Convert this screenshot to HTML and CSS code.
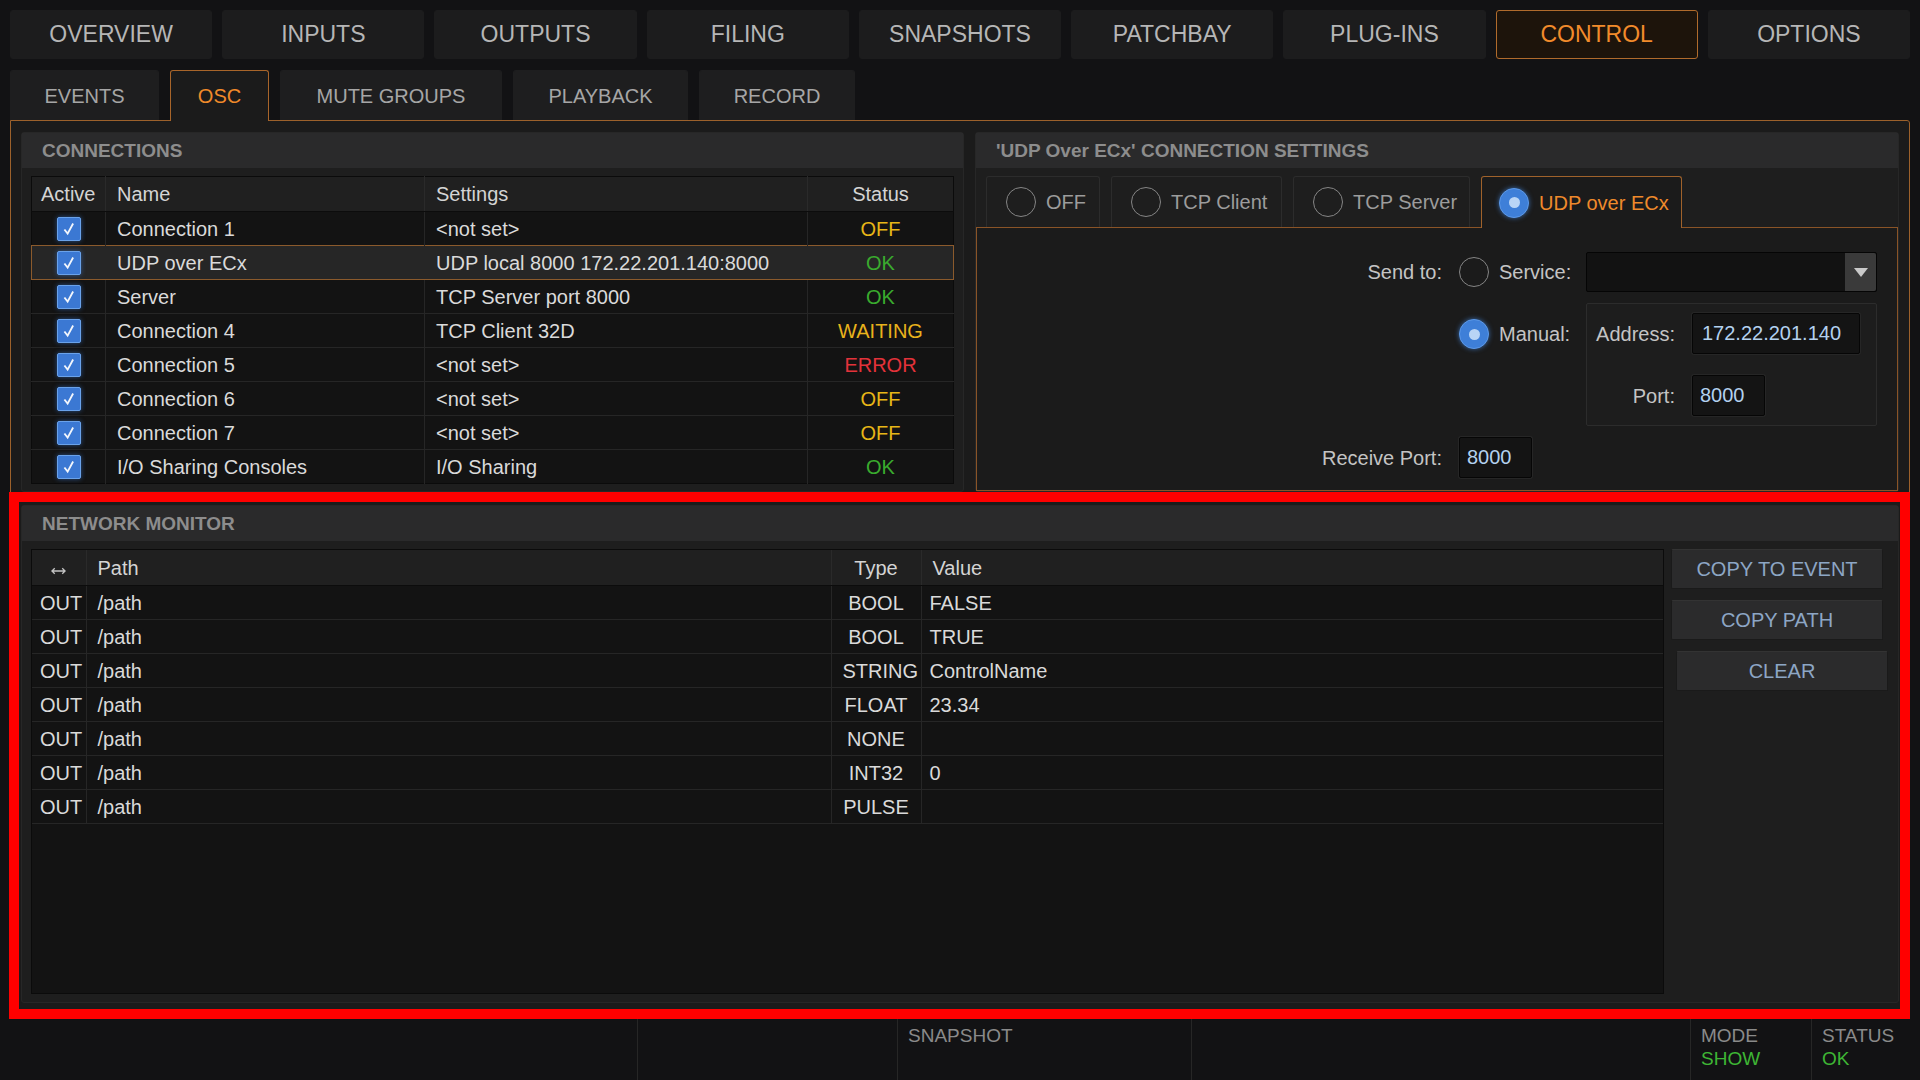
FILE: index.html
```html
<!DOCTYPE html>
<html lang="en">
<head>
    <meta charset="UTF-8">
    <title>Control - OSC</title>
    <link rel="stylesheet" href="styles.css">
</head>
<body>
    <div id="app">
        <ul class="main-tabs">
            <li>OVERVIEW</li>
            <li>INPUTS</li>
            <li>OUTPUTS</li>
            <li>FILING</li>
            <li>SNAPSHOTS</li>
            <li>PATCHBAY</li>
            <li>PLUG-INS</li>
            <li class="on">CONTROL</li>
            <li>OPTIONS</li>
        </ul>
        <ul class="sub-tabs">
            <li class="w-events">EVENTS</li>
            <li class="w-osc on">OSC</li>
            <li class="w-mute">MUTE GROUPS</li>
            <li class="w-play">PLAYBACK</li>
            <li class="w-rec">RECORD</li>
        </ul>

        <div class="main-panel">
            <div class="top-row">
                <div class="panel conn">
                    <h2>CONNECTIONS</h2>
                    <table class="grid conn-table">
                        <colgroup>
                            <col style="width:74px">
                            <col style="width:319px">
                            <col style="width:383px">
                            <col>
                        </colgroup>
                        <tr>
                            <th>Active</th><th>Name</th><th>Settings</th><th class="c">Status</th>
                        </tr>
                        <tr>
                            <td class="c"><span class="chk"><svg viewBox="0 0 24 24"><polyline points="7,12.5 10.5,17 16.5,6"/></svg></span></td>
                            <td>Connection 1</td><td>&lt;not set&gt;</td><td class="c off">OFF</td>
                        </tr>
                        <tr class="sel">
                            <td class="c"><span class="chk"><svg viewBox="0 0 24 24"><polyline points="7,12.5 10.5,17 16.5,6"/></svg></span></td>
                            <td>UDP over ECx</td><td>UDP local 8000 172.22.201.140:8000</td><td class="c ok">OK</td>
                        </tr>
                        <tr>
                            <td class="c"><span class="chk"><svg viewBox="0 0 24 24"><polyline points="7,12.5 10.5,17 16.5,6"/></svg></span></td>
                            <td>Server</td><td>TCP Server port 8000</td><td class="c ok">OK</td>
                        </tr>
                        <tr>
                            <td class="c"><span class="chk"><svg viewBox="0 0 24 24"><polyline points="7,12.5 10.5,17 16.5,6"/></svg></span></td>
                            <td>Connection 4</td><td>TCP Client 32D</td><td class="c wait">WAITING</td>
                        </tr>
                        <tr>
                            <td class="c"><span class="chk"><svg viewBox="0 0 24 24"><polyline points="7,12.5 10.5,17 16.5,6"/></svg></span></td>
                            <td>Connection 5</td><td>&lt;not set&gt;</td><td class="c err">ERROR</td>
                        </tr>
                        <tr>
                            <td class="c"><span class="chk"><svg viewBox="0 0 24 24"><polyline points="7,12.5 10.5,17 16.5,6"/></svg></span></td>
                            <td>Connection 6</td><td>&lt;not set&gt;</td><td class="c off">OFF</td>
                        </tr>
                        <tr>
                            <td class="c"><span class="chk"><svg viewBox="0 0 24 24"><polyline points="7,12.5 10.5,17 16.5,6"/></svg></span></td>
                            <td>Connection 7</td><td>&lt;not set&gt;</td><td class="c off">OFF</td>
                        </tr>
                        <tr>
                            <td class="c"><span class="chk"><svg viewBox="0 0 24 24"><polyline points="7,12.5 10.5,17 16.5,6"/></svg></span></td>
                            <td>I/O Sharing Consoles</td><td>I/O Sharing</td><td class="c ok">OK</td>
                        </tr>
                    </table>
                </div>

                <div class="panel udp">
                    <h2>'UDP Over ECx' CONNECTION SETTINGS</h2>
                    <ul class="mode-tabs">
                        <li class="w-off"><span class="radio"></span>OFF</li>
                        <li class="w-client"><span class="radio"></span>TCP Client</li>
                        <li class="w-server"><span class="radio"></span>TCP Server</li>
                        <li class="w-udp on"><span class="radio on"></span>UDP over ECx</li>
                    </ul>
                    <div class="mode-body">
                        <div class="send-grid">
                            <label class="lbl">Send to:</label>
                            <span class="radio"></span>
                            <label class="opt">Service:</label>
                            <div class="dropdown"><div class="dd-field"></div><div class="dd-arrow"></div></div>

                            <span class="radio on top"></span>
                            <label class="opt top">Manual:</label>
                            <div class="group">
                                <label>Address:</label>
                                <div class="field w-addr">172.22.201.140</div>
                                <label>Port:</label>
                                <div class="field w-port">8000</div>
                            </div>

                            <label class="lbl">Receive Port:</label>
                            <div class="field w-port recv">8000</div>
                        </div>
                    </div>
                </div>
            </div>

            <div class="panel monitor">
                <h2>NETWORK MONITOR</h2>
                <div class="monitor-body">
                    <div class="monitor-list">
                        <table class="grid mon-table">
                            <colgroup>
                                <col style="width:54px">
                                <col style="width:745px">
                                <col style="width:90px">
                                <col>
                            </colgroup>
                            <tr>
                                <th class="c"><svg class="dir" viewBox="0 0 16 8"><path d="M1 4h14M4 1L1 4l3 3M12 1l3 3-3 3"/></svg></th>
                                <th>Path</th><th class="c">Type</th><th>Value</th>
                            </tr>
                            <tr><td>OUT</td><td>/path</td><td class="c">BOOL</td><td>FALSE</td></tr>
                            <tr><td>OUT</td><td>/path</td><td class="c">BOOL</td><td>TRUE</td></tr>
                            <tr><td>OUT</td><td>/path</td><td class="c">STRING</td><td>ControlName</td></tr>
                            <tr><td>OUT</td><td>/path</td><td class="c">FLOAT</td><td>23.34</td></tr>
                            <tr><td>OUT</td><td>/path</td><td class="c">NONE</td><td></td></tr>
                            <tr><td>OUT</td><td>/path</td><td class="c">INT32</td><td>0</td></tr>
                            <tr><td>OUT</td><td>/path</td><td class="c">PULSE</td><td></td></tr>
                        </table>
                    </div>
                    <div class="monitor-btns">
                        <a class="btn">COPY TO EVENT</a>
                        <a class="btn">COPY PATH</a>
                        <a class="btn pressed">CLEAR</a>
                    </div>
                </div>
            </div>
        </div>

        <div class="status-bar">
            <div></div>
            <div></div>
            <div>SNAPSHOT</div>
            <div></div>
            <div>MODE<br><span class="green">SHOW</span></div>
            <div>STATUS<br><span class="green">OK</span></div>
        </div>
    </div>
    <div class="highlight"></div>
</body>
</html>
```

FILE: styles.css
```css
body,ul,li,h2,table{
    margin: 0;
    padding: 0;
}
body{
    background-color: #121214;
    font: 20px/1 "Liberation Sans", Arial, sans-serif;
    color: #d6d6d6;
}
ul{
    list-style-type: none;
}
#app{
    width: 1920px;
    height: 1080px;
    padding: 10px 10px 0;
    box-sizing: border-box;
}

/* top navigation */
.main-tabs{
    display: grid;
    grid-template-columns: repeat(9, 1fr);
    gap: 10px;
    height: 49px;
}
.main-tabs li{
    display: flex;
    align-items: center;
    justify-content: center;
    background-color: #1c1c1d;
    border: 1px solid #1c1c1d;
    border-radius: 3px;
    font-size: 23px;
    color: #b6b6b6;
}
.main-tabs li.on{
    background-color: #1d140b;
    border-color: #b06b2c;
    color: #f28b2b;
}
.sub-tabs{
    display: flex;
    gap: 11px;
    margin-top: 11px;
    height: 50px;
}
.sub-tabs li{
    display: flex;
    align-items: center;
    justify-content: center;
    box-sizing: border-box;
    background-color: #1e1e1f;
    border: 1px solid #1e1e1f;
    border-bottom: 0;
    border-radius: 3px 3px 0 0;
    color: #a6a6a6;
}
.sub-tabs li.on{
    position: relative;
    z-index: 1;
    height: 51px;
    margin-bottom: -1px;
    background-color: #1b1b1b;
    border-color: #a8652a;
    color: #f08a2a;
}
.w-events{ width: 149px; }
.w-osc{ width: 99px; }
.w-mute{ width: 222px; }
.w-play{ width: 175px; }
.w-rec{ width: 156px; }

/* main panel */
.main-panel{
    height: 890px;
    box-sizing: border-box;
    padding: 11px 10px 0;
    background-color: #1b1b1b;
    border: 1px solid #9c612b;
    border-radius: 0 3px 3px 3px;
}
.top-row{
    display: flex;
    gap: 11px;
    height: 360px;
}
.panel{
    display: flex;
    flex-direction: column;
    box-sizing: border-box;
    background-color: #1e1e1e;
    border: 1px solid #272727;
    border-radius: 3px;
}
.panel h2{
    height: 35px;
    padding-left: 20px;
    background-color: #2a2a2b;
    font: 700 19px/36px "Liberation Sans", Arial, sans-serif;
    color: #8d8d8d;
}
.conn{
    width: 943px;
}
.udp{
    flex: 1;
}

/* tables */
.grid{
    border-collapse: collapse;
    table-layout: fixed;
    background-color: #131313;
}
.grid th{
    height: 34px;
    padding: 0 11px;
    background-color: #202020;
    border-left: 1px solid #2a2a2a;
    border-bottom: 1px solid #0c0c0c;
    font-weight: normal;
    text-align: left;
    color: #d4d4d4;
}
.grid td{
    height: 33px;
    padding: 0 11px;
    border-top: 1px solid #262626;
    border-left: 1px solid #262626;
    white-space: nowrap;
    color: #dadada;
}
.grid th:first-child,
.grid td:first-child{
    border-left: 0;
}
.grid .c{
    text-align: center;
}
.conn-table{
    width: 923px;
    margin: 8px 0 0 9px;
    border: 1px solid #0b0b0b;
}
.conn-table th:first-child{
    padding: 0 0 0 9px;
    text-align: left;
}
.conn-table td.c:first-child{
    padding: 0;
}
.conn-table tr.sel td{
    background-color: #262626;
    border-top: 1px solid #8b5a2c;
    border-bottom: 1px solid #8b5a2c;
}
.conn-table tr.sel td:first-child{
    border-left: 1px solid #8b5a2c;
}
.conn-table tr.sel td:last-child{
    border-right: 1px solid #8b5a2c;
}
.chk{
    display: inline-block;
    width: 24px;
    height: 24px;
    box-sizing: border-box;
    vertical-align: middle;
    background-color: #3b78d3;
    border: 1px solid #6aa2ea;
    border-radius: 2px;
    box-shadow: 0 0 5px rgba(60, 130, 230, .55);
}
.chk svg{
    display: block;
    width: 22px;
    height: 22px;
    fill: none;
    stroke: #f2f6fc;
    stroke-width: 2;
}
.off{ color: #e7b617 !important; }
.ok{ color: #3aab2e !important; }
.wait{ color: #e8b21c !important; }
.err{ color: #e3323a !important; }

/* udp settings */
.mode-tabs{
    display: flex;
    gap: 11px;
    height: 51px;
    margin: 8px 0 0 10px;
}
.mode-tabs li{
    display: flex;
    align-items: center;
    gap: 10px;
    box-sizing: border-box;
    padding-left: 19px;
    background-color: #1e1e1e;
    border: 1px solid #2c2c2c;
    border-bottom: 0;
    border-radius: 3px 3px 0 0;
    font-size: 20px;
    color: #9c9c9c;
}
.mode-tabs li.on{
    position: relative;
    z-index: 1;
    margin-bottom: -1px;
    height: 52px;
    padding-left: 17px;
    background-color: #1b1b1b;
    border-color: #a0622b;
    color: #ef8a2b;
}
.w-off{ width: 114px; }
.w-client{ width: 171px; }
.w-server{ width: 177px; }
.w-udp{ width: 201px; }
.radio{
    display: flex;
    align-items: center;
    justify-content: center;
    flex: none;
    width: 30px;
    height: 30px;
    box-sizing: border-box;
    border: 1px solid #858585;
    border-radius: 50%;
}
.radio.on{
    background-color: #3e7fd8;
    border-color: #5d99e8;
    box-shadow: 0 0 5px rgba(70, 140, 230, .7);
}
.radio.on::after{
    content: "";
    width: 11px;
    height: 11px;
    border-radius: 50%;
    background-color: #b9d5f6;
}
.mode-body{
    flex: 1;
    background-color: #1b1b1b;
    border: 1px solid #8a5427;
}
.send-grid{
    display: grid;
    grid-template-columns: 472px 30px 77px 291px;
    grid-template-rows: 40px 123px 41px;
    column-gap: 10px;
    row-gap: 11px;
    padding-top: 24px;
    align-items: center;
}
.send-grid label{
    color: #c4c4c4;
}
.send-grid .lbl{
    grid-column: 1;
    padding-right: 7px;
    text-align: right;
}
.send-grid .radio.top{
    grid-column: 2;
    align-self: start;
    margin-top: 16px;
}
.send-grid .opt.top{
    align-self: start;
    margin-top: 21px;
}
.dropdown{
    display: flex;
    height: 40px;
    box-sizing: border-box;
    border: 1px solid #050505;
    border-radius: 2px;
    background-color: #121212;
}
.dd-field{
    flex: 1;
}
.dd-arrow{
    display: flex;
    align-items: center;
    justify-content: center;
    width: 31px;
    background-color: #3a3a3a;
    border-radius: 0 2px 2px 0;
}
.dd-arrow::after{
    content: "";
    border-top: 9px solid #c9c9c9;
    border-left: 7px solid transparent;
    border-right: 7px solid transparent;
}
.group{
    display: grid;
    grid-template-columns: 88px auto;
    grid-template-rows: 41px 41px;
    column-gap: 17px;
    row-gap: 21px;
    align-items: center;
    justify-items: start;
    height: 123px;
    box-sizing: border-box;
    padding: 9px 0;
    background-color: #1d1d1d;
    border: 1px solid #2c2c2c;
    border-radius: 2px;
}
.group label{
    justify-self: end;
}
.field{
    height: 41px;
    box-sizing: border-box;
    padding-left: 9px;
    line-height: 39px;
    background-color: #141414;
    border: 1px solid #060606;
    border-radius: 2px;
    box-shadow: 0 0 0 1px #262626;
    color: #b3d1ef;
}
.w-addr{ width: 168px; }
.w-port{ width: 73px; padding-left: 7px; }
.recv{
    grid-column: 2 / span 3;
    justify-self: start;
}

/* network monitor */
.monitor{
    height: 498px;
    margin-top: 13px;
}
.monitor-body{
    display: flex;
    flex: 1;
    padding: 8px 0 8px 9px;
}
.monitor-list{
    width: 1633px;
    box-sizing: border-box;
    background-color: #131313;
    border: 1px solid #0b0b0b;
}
.mon-table{
    width: 100%;
}
.mon-table th{
    height: 35px;
}
.mon-table td:first-child{
    padding: 0 0 0 8px;
}
.mon-table td:last-child{
    padding-left: 8px;
}
.mon-table tr:last-child td{
    border-bottom: 1px solid #262626;
}
.dir{
    width: 15px;
    height: 8px;
    fill: none;
    stroke: #c4c4c4;
    stroke-width: 1.4;
}
.monitor-btns{
    display: flex;
    flex-direction: column;
    gap: 11px;
    margin-left: 7px;
}
.btn{
    display: flex;
    align-items: center;
    justify-content: center;
    width: 212px;
    height: 40px;
    box-sizing: border-box;
    background-color: #2b2b2c;
    border: 1px solid #1a1a1a;
    border-top-color: #333;
    border-radius: 2px;
    color: #8da6c5;
}
.btn.pressed{
    margin-left: 5px;
}

/* status bar */
.status-bar{
    display: grid;
    grid-template-columns: 637px 260px 294px 499px 121px 1fr;
    height: 61px;
    margin: 9px -10px 0;
    font-size: 19px;
    line-height: 23px;
    color: #8a8a8a;
}
.status-bar div{
    padding: 5px 10px 0;
    border-left: 1px solid #262626;
}
.status-bar div:first-child{
    border-left: 0;
}
.green{
    color: #3eb534;
}

/* review marker drawn over the screenshot */
.highlight{
    position: absolute;
    left: 9px;
    top: 492px;
    width: 1901px;
    height: 527px;
    box-sizing: border-box;
    border: 10px solid #ff0000;
    pointer-events: none;
}
```
